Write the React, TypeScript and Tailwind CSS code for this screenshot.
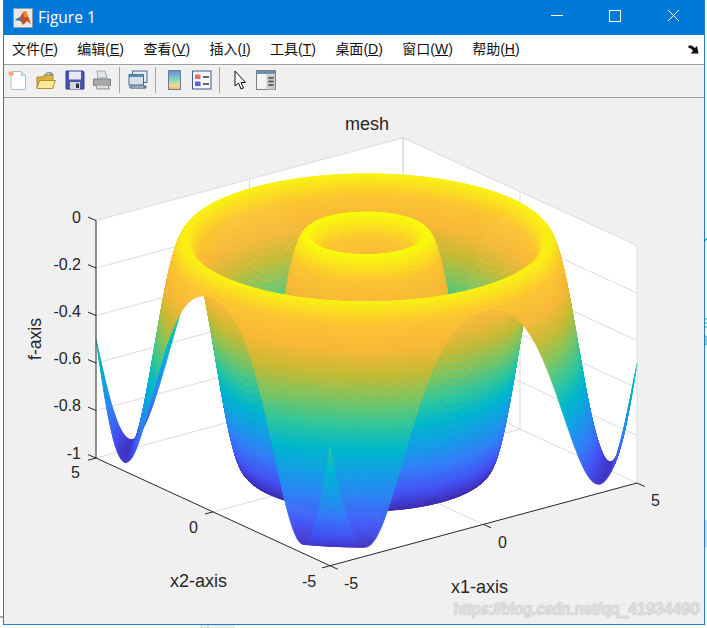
import { useMemo } from "react";

const menus = [
  ["文件", "F"],
  ["编辑", "E"],
  ["查看", "V"],
  ["插入", "I"],
  ["工具", "T"],
  ["桌面", "D"],
  ["窗口", "W"],
  ["帮助", "H"],
];

// colormap anchors, 0 to 1 in steps of 0.1 (tuned against the figure)
const parula = [
  [0.2422, 0.1504, 0.6603],
  [0.27, 0.33, 0.97],
  [0.2, 0.5, 0.97],
  [0.08, 0.62, 0.9],
  [0.0, 0.72, 0.8],
  [0.2, 0.78, 0.6],
  [0.5, 0.77, 0.38],
  [0.78, 0.73, 0.2],
  [0.97, 0.72, 0.22],
  [0.99, 0.77, 0.2],
  [0.9763, 0.9831, 0.0538],
];

function colorAt(t: number) {
  const q = Math.max(0, Math.min(255, Math.floor(t * 256))) / 255;
  const p = q * 10;
  const i = Math.min(9, Math.floor(p));
  const f = p - i;
  const c = parula[i].map((v, k) => Math.round((v + (parula[i + 1][k] - v) * f) * 255));
  return `rgb(${c[0]},${c[1]},${c[2]})`;
}

// orthographic view read off the axes box
function project(a: number, b: number, z: number): [number, number] {
  return [330 + a * 307 - b * 234, 565.7 - a * 82.7 - b * 107.7 - (z + 1) * 237.5];
}

function pts(list: [number, number][]) {
  return list.map((p) => p[0].toFixed(1) + "," + p[1].toFixed(1)).join(" ");
}

// negated Schaffer function
function height(a: number, b: number) {
  const x = a * 10 - 5;
  const y = b * 10 - 5;
  const r2 = x * x + y * y;
  const s = Math.sin(Math.sqrt(r2));
  return -0.5 + (s * s - 0.5) / Math.pow(1 + 0.001 * r2, 2);
}

function Surface() {
  const quads = useMemo(() => {
    const n = 260;
    const out: { d: string; c: string }[] = [];
    for (let i = n - 1; i >= 0; i--) {
      for (let j = n - 1; j >= 0; j--) {
        const a0 = i / n;
        const a1 = (i + 1) / n;
        const b0 = j / n;
        const b1 = (j + 1) / n;
        const z = [height(a0, b0), height(a1, b0), height(a1, b1), height(a0, b1)];
        const p = [project(a0, b0, z[0]), project(a1, b0, z[1]), project(a1, b1, z[2]), project(a0, b1, z[3])];
        const d = "M" + p.map((q) => q[0].toFixed(1) + " " + q[1].toFixed(1)).join("L") + "Z";
        out.push({ d, c: colorAt((z[0] + z[1] + z[2] + z[3]) / 4 + 1) });
      }
    }
    return out;
  }, []);
  return (
    <g strokeWidth={0.6} strokeLinejoin="round">
      {quads.map((q, i) => (
        <path key={i} d={q.d} fill={q.c} stroke={q.c} />
      ))}
    </g>
  );
}

function Chart() {
  const zs = [0, -0.2, -0.4, -0.6, -0.8, -1];
  const L = project(0, 1, -1);
  const F = project(0, 0, -1);
  const R = project(1, 0, -1);
  const Lt = project(0, 1, 0);
  const Bt = project(1, 1, 0);
  const Rt = project(1, 0, 0);
  const B = project(1, 1, -1);
  const grid = "#dcdcdc";
  const ink = "#262626";
  return (
    <svg viewBox="4 98 700 526" className="block h-[526px] w-[700px] font-['Liberation_Sans',Arial,sans-serif]">
      <polygon points={pts([Lt, Bt, Rt, R, F, L])} fill="#fff" />
      <g stroke={grid} fill="none">
        <polyline points={pts([Lt, Bt, Rt, R])} />
        <polyline points={pts([L, B, R])} />
        <line x1={B[0]} y1={B[1]} x2={Bt[0]} y2={Bt[1]} stroke="#c4c4c4" />
        {[-0.2, -0.4, -0.6, -0.8].map((z) => (
          <polyline key={z} points={pts([project(0, 1, z), project(1, 1, z), project(1, 0, z)])} />
        ))}
        <polyline points={pts([project(0.5, 1, 0), project(0.5, 1, -1), project(0.5, 0, -1)])} />
        <polyline points={pts([project(1, 0.5, 0), project(1, 0.5, -1), project(0, 0.5, -1)])} />
      </g>

      <Surface />

      <g stroke={ink} fill="none">
        <polyline points={pts([Lt, L, F, R])} />
        {zs.map((z) => {
          const p = project(0, 1, z);
          return <line key={z} x1={p[0]} y1={p[1]} x2={p[0] - 8} y2={p[1] - 3.4} />;
        })}
        {[0, 0.5, 1].map((b) => {
          const p = project(0, b, -1);
          return <line key={b} x1={p[0]} y1={p[1]} x2={p[0] - 8} y2={p[1] + 2.2} />;
        })}
        {[0, 0.5, 1].map((a) => {
          const p = project(a, 0, -1);
          return <line key={a} x1={p[0]} y1={p[1]} x2={p[0] + 7.7} y2={p[1] + 3.5} />;
        })}
      </g>

      <g fill={ink} fontSize={16}>
        <text x={367} y={130} textAnchor="middle" fontSize={18}>mesh</text>
        {zs.map((z, i) => (
          <text key={z} x={81} y={222.6 + i * 47.2} textAnchor="end">{z === 0 ? "0" : z === -1 ? "-1" : z.toFixed(1)}</text>
        ))}
        <text x={71} y={478}>5</text>
        <text x={189} y={533}>0</text>
        <text x={302} y={587}>-5</text>
        <text x={344} y={589}>-5</text>
        <text x={498} y={548}>0</text>
        <text x={651} y={506}>5</text>
        <text x={170} y={587} fontSize={18}>x2-axis</text>
        <text x={451} y={593} fontSize={18}>x1-axis</text>
        <text x={0} y={0} fontSize={17.6} transform="translate(41 360) rotate(-90)">f-axis</text>
      </g>
      <text x={454} y={614} fontSize={16} fill="#f4f4f4" stroke="#cfcfcf" strokeWidth={0.5} className="[text-shadow:1px_0_0_#e4e4e4,-1px_1px_0_#dadada]">
        https://blog.csdn.net/qq_41934490
      </text>
    </svg>
  );
}

function MatlabLogo() {
  return (
    <svg width="20" height="20" viewBox="0 0 20 20" className="block">
      <rect x="0.5" y="0.5" width="19" height="19" fill="#e8e8e8" stroke="#9a9a9a" />
      <path d="M2 12 L7 9 L10 4 L13 3 L18 16 L14 13 L10 17 L7 12 Z" fill="#c8501e" />
      <path d="M2 12 L7 9 L9 12 L7 13 Z" fill="#3a78b5" />
      <path d="M10 4 L13 3 L15 9 L11 9 Z" fill="#f08a24" />
    </svg>
  );
}

function ToolIcon({ children, className }: { children: React.ReactNode; className?: string }) {
  return (
    <svg width="20" height="20" viewBox="0 0 20 20" className={"block shrink-0 " + (className ?? "")}>
      {children}
    </svg>
  );
}

function Separator({ className }: { className: string }) {
  return <span className={"block h-[26px] w-px shrink-0 bg-[#a6a6a6] " + className} />;
}

function Toolbar() {
  return (
    <div className="flex h-[33px] shrink-0 items-center border-b border-[#a0a0a0] bg-[#f0f0f0] pb-[3px] pl-[4px]">
      <ToolIcon>
        <path d="M3 1.5h10.5l4 4v14H3z" fill="#fff" stroke="#a9c2dc" />
        <path d="M13.5 1.5v4h4" fill="#dbe6f2" stroke="#a9c2dc" />
        <circle cx="3" cy="3.5" r="2.6" fill="#f2a27a" stroke="#f7cbb0" />
      </ToolIcon>
      <ToolIcon className="ml-[8px]">
        <path d="M1 7h6l1.5-2h8.5v13H1z" fill="#dcb33c" stroke="#a8862a" />
        <path d="M9 5c2-3 5-3 7-1M14 2l2.5 2.2L13.5 5" fill="none" stroke="#7d8ea3" strokeWidth="1.3" />
        <path d="M1 18.5l2.5-8h16l-3 8z" fill="#f9e79b" stroke="#b3922f" />
      </ToolIcon>
      <ToolIcon className="ml-[9px]">
        <path d="M1 1h17l1 1v17H1z" fill="#4a55ad" stroke="#333b88" />
        <rect x="4" y="1.5" width="12" height="8" fill="#e6e8f5" />
        <rect x="5" y="12" width="10" height="7" fill="#d6d6d6" />
        <rect x="11" y="13.5" width="3" height="4.5" fill="#333" />
      </ToolIcon>
      <ToolIcon className="ml-[7px]">
        <path d="M5 1h8l2 7H6z" fill="#dfe3ea" stroke="#a4a8ae" />
        <path d="M1.5 9h17v6.5h-17z" fill="#a9a9a9" stroke="#828282" />
        <path d="M4 15h12l1.5 4H5z" fill="#dedede" stroke="#8f8f8f" />
      </ToolIcon>
      <Separator className="ml-[7px]" />
      <ToolIcon className="ml-[8px]">
        <rect x="4.5" y="1" width="14.5" height="11.5" fill="#e4ebf3" stroke="#45698f" />
        <rect x="1" y="4.5" width="14.5" height="10.5" fill="#d7e1ec" stroke="#45698f" />
        <rect x="1" y="4.5" width="14.5" height="2.5" fill="#5f88b0" />
        <path d="M3 17h5.5M11 17h6" stroke="#5c7691" strokeWidth="3.4" strokeLinecap="round" fill="none" />
        <path d="M3.5 17h3M12.5 17h3M7 17h6" stroke="#d5dde6" strokeWidth="1.2" />
      </ToolIcon>
      <Separator className="ml-[7px]" />
      <ToolIcon className="ml-[9px]">
        <defs>
          <linearGradient id="cb" x1="0" y1="0" x2="0" y2="1">
            <stop offset="0" stopColor="#6f86dc" />
            <stop offset="0.45" stopColor="#7fd4c4" />
            <stop offset="0.8" stopColor="#f3dc90" />
            <stop offset="1" stopColor="#f0a86c" />
          </linearGradient>
        </defs>
        <rect x="3.5" y="0.5" width="12" height="19" fill="url(#cb)" stroke="#6b7f99" />
      </ToolIcon>
      <ToolIcon className="ml-[7px]">
        <rect x="0.5" y="1" width="18.5" height="18" fill="#f4f6fa" stroke="#3d5a85" />
        <rect x="3" y="4.5" width="5.5" height="4.5" fill="#ea6a72" />
        <rect x="3" y="11.5" width="5.5" height="4.5" fill="#5a62d8" />
        <path d="M11 7h6M11 14h6" stroke="#333" strokeWidth="1.5" />
      </ToolIcon>
      <Separator className="ml-[7px]" />
      <ToolIcon className="ml-[10px]">
        <path d="M5 1v15l3.5-3 2.5 6 2.5-1-2.5-5.5h4.5z" fill="#fff" stroke="#111" strokeLinejoin="round" />
      </ToolIcon>
      <ToolIcon className="ml-[6px]">
        <rect x="0.5" y="0.5" width="19" height="19" fill="#f4f4f4" stroke="#808080" />
        <rect x="1" y="1" width="18" height="3" fill="#6b8fb0" />
        <rect x="10.5" y="4.5" width="8.5" height="15" fill="#c8c8c8" />
        <path d="M12.5 8h5M12.5 11.5h5M12.5 15h5" stroke="#444" strokeWidth="1.5" />
      </ToolIcon>
    </div>
  );
}

export default function App() {
  return (
    <div className="relative h-[628px] w-[707px] overflow-hidden bg-white">
      {/* Bits of the desktop showing round the window */}
      <svg width="707" height="628" viewBox="0 0 707 628" className="absolute inset-0" fill="none">
        <path d="M705 239h2M705 241l2-2M705 319h2M705 323h2M705 327h2M705 336h1v9h-1" stroke="#2a9d3a" />
        <path d="M705 520h2v27h-2z" fill="#d8d8d8" />
        <path d="M0 617h3" stroke="#555" />
        <path d="M201 625h34v3h-34z" fill="#ececec" />
        <path d="M201 625v3M208 625v3" stroke="#c8c8c8" />
      </svg>
      <div className="relative ml-[3px] flex h-[625px] w-[702px] flex-col border-x border-b border-[#1a7fd4] bg-[#f0f0f0]">
        <div className="flex h-[35px] shrink-0 items-center bg-[#0078d7] pl-[9px] text-white">
          <MatlabLogo />
          <span className="ml-[5px] font-['Open_Sans',sans-serif] text-[15.5px]">Figure 1</span>
          <div className="ml-auto flex items-center">
            <svg width="140" height="35" viewBox="0 0 140 35" className="block" fill="none" stroke="#fff">
              <path d="M7 15.5h12" />
              <rect x="65.5" y="10.5" width="11" height="11" />
              <path d="M124 10l11 11M135 10l-11 11" />
            </svg>
            <span className="w-[20px]" />
          </div>
        </div>

        <div className="flex h-[30px] shrink-0 items-center gap-[19.4px] border-b border-[#a0a0a0] bg-white pl-[8px] font-['Liberation_Sans','Noto_Sans_CJK_SC',sans-serif] text-[14px] text-[#111]">
          {menus.map(([label, key]) => (
            <span key={key}>
              {label}(<span className="underline">{key}</span>)
            </span>
          ))}
          <svg width="11" height="9" viewBox="0 0 11 9" className="ml-auto mr-[5px] block">
            <path d="M0.5 0.5h3L7 3l2-2 1.5 7.5H2.5L5 6 3 3.5 0.5 3z" fill="#111" />
          </svg>
        </div>

        <Toolbar />
        <Chart />
      </div>
    </div>
  );
}
